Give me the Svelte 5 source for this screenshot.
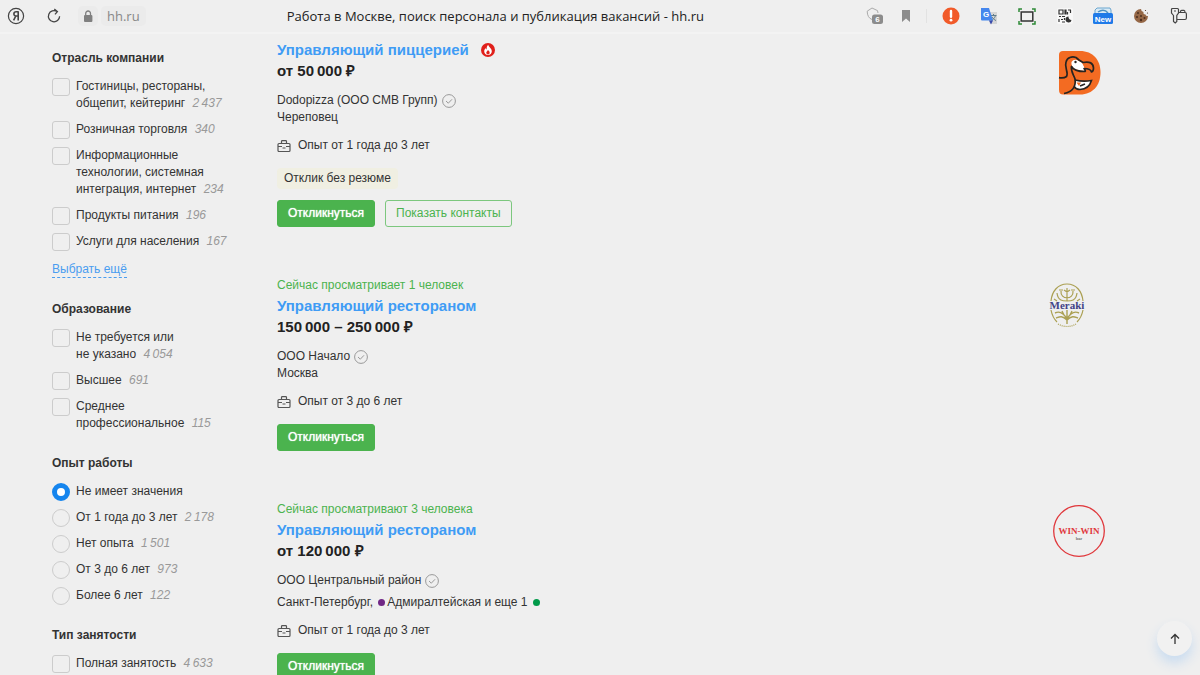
<script>
  let experience = 'any';

  const industries = [
    { id: 'horeca', lines: ['Гостиницы, рестораны,', 'общепит, кейтеринг'], count: '2\u2009437' },
    { id: 'retail', lines: ['Розничная торговля'], count: '340' },
    { id: 'it', lines: ['Информационные', 'технологии, системная', 'интеграция, интернет'], count: '234' },
    { id: 'food', lines: ['Продукты питания'], count: '196' },
    { id: 'services', lines: ['Услуги для населения'], count: '167' }
  ];

  const education = [
    { id: 'none', lines: ['Не требуется или', 'не указано'], count: '4\u2009054' },
    { id: 'higher', lines: ['Высшее'], count: '691' },
    { id: 'special', lines: ['Среднее', 'профессиональное'], count: '115' }
  ];

  const experiences = [
    { id: 'any', lines: ['Не имеет значения'] },
    { id: '1-3', lines: ['От 1 года до 3 лет'], count: '2\u2009178' },
    { id: 'no', lines: ['Нет опыта'], count: '1\u2009501' },
    { id: '3-6', lines: ['От 3 до 6 лет'], count: '973' },
    { id: '6+', lines: ['Более 6 лет'], count: '122' }
  ];

  const employment = [
    { id: 'full', lines: ['Полная занятость'], count: '4\u2009633' }
  ];

  const groups = [
    { title: 'Отрасль компании', name: 'industry', items: industries, more: true },
    { title: 'Образование', name: 'education', items: education },
    { title: 'Опыт работы', name: 'experience', items: experiences, radio: true },
    { title: 'Тип занятости', name: 'employment', items: employment }
  ];

  const vacancies = [
    {
      title: 'Управляющий пиццерией', hot: true, salary: 'от 50\u2009000 ₽',
      company: 'Dodopizza (ООО СМВ Групп)', city: 'Череповец',
      exp: 'Опыт от 1 года до 3 лет', tag: 'Отклик без резюме', contacts: true, logo: 'dodo'
    },
    {
      viewers: 'Сейчас просматривает 1 человек',
      title: 'Управляющий рестораном', salary: '150\u2009000 – 250\u2009000 ₽',
      company: 'ООО Начало', city: 'Москва', exp: 'Опыт от 3 до 6 лет', logo: 'meraki'
    },
    {
      viewers: 'Сейчас просматривают 3 человека',
      title: 'Управляющий рестораном', salary: 'от 120\u2009000 ₽',
      company: 'ООО Центральный район', city: 'Санкт-Петербург,', metro: 'Адмиралтейская и еще 1',
      exp: 'Опыт от 1 года до 3 лет', logo: 'winwin'
    }
  ];
</script>

<div class="page">
  <header class="toolbar">
    <button class="tool wide" aria-label="Яндекс">
      <svg width="18" height="18" viewBox="0 0 18 18">
        <circle cx="9" cy="9" r="7.6" fill="none" stroke="#444" stroke-width="1.2" />
        <path d="M11.2 4.2V13.6M11.2 4.8H9.2C6.2 4.8 6.2 9 8.8 9H11.2M8.8 9 6.6 13.4" fill="none" stroke="#444" stroke-width="1.6" />
      </svg>
    </button>
    <button class="tool wide" aria-label="Обновить">
      <svg width="16" height="16" viewBox="0 0 16 16" fill="none" stroke="#444" stroke-width="1.3">
        <path d="M13.6 8.3A5.6 5.6 0 1 1 11 3.5M8.3 1.1 11.4 3.6 9 6.4" />
      </svg>
    </button>
    <div class="address">
      <span class="lock">
        <svg width="10" height="13" viewBox="0 0 10 13">
          <rect x="1" y="5" width="8.4" height="7" rx="1" fill="#808080" />
          <path d="M2.7 5.5V3.4a2.4 2.4 0 0 1 4.8 0V5.5" fill="none" stroke="#808080" stroke-width="1.3" />
        </svg>
      </span>
      <span class="host">hh.ru</span>
    </div>
    <div class="page-title">Работа в Москве, поиск персонала и публикация вакансий - hh.ru</div>
    <button class="tool small" aria-label="Защита">
      <svg width="18" height="18" viewBox="0 0 18 18">
        <path d="M6 12.5C3 11.5 1.2 8.5 1.2 4.2L6 1 11.5 3.6 12 6" fill="none" stroke="#aaa" stroke-width="1" />
        <rect x="6" y="7.5" width="11" height="9.5" rx="2.5" fill="#8c8c8c" />
        <text x="11.5" y="15.2" text-anchor="middle" font-size="8" font-weight="700" fill="#fff">6</text>
      </svg>
    </button>
    <button class="tool small" aria-label="Закладка">
      <svg width="10" height="14" viewBox="0 0 10 14"><path d="M1 1H9V13L5 9.6 1 13Z" fill="#8c8c8c" /></svg>
    </button>
    <span class="divider"></span>
    <button class="tool" aria-label="Предупреждение">
      <svg width="18" height="18" viewBox="0 0 18 18">
        <circle cx="9" cy="9" r="8.5" fill="#f15a29" />
        <path d="M9 4V9.8" stroke="#fff" stroke-width="2.4" stroke-linecap="round" />
        <circle cx="9" cy="13.2" r="1.4" fill="#fff" />
      </svg>
    </button>
    <button class="tool" aria-label="Переводчик">
      <svg width="18" height="18" viewBox="0 0 18 18">
        <path d="M7 5H17V17H10Z" fill="#d6d6d6" />
        <path d="M11 8.500H16.500M13.500 7V8.500M15.500 8.500C15 11 12.500 13 11.500 13.500M12 10C13 11.500 14.500 13 16 13.500" stroke="#607d8b" stroke-width="1" fill="none" />
        <path d="M1 1H9L13 13.500H2Q1 13.500 1 12.500Z" fill="#4587ee" />
        <path d="M9 13.500H13L11 17.500Z" fill="#3949ab" />
        <text x="6" y="10" text-anchor="middle" font-size="8" font-weight="700" fill="#fff">G</text>
      </svg>
    </button>
    <button class="tool" aria-label="Снимок экрана">
      <svg width="18" height="17" viewBox="0 0 18 17" fill="none">
        <rect x="3.2" y="4" width="11.6" height="9" stroke="#333" stroke-width="1.5" />
        <path d="M1 4V1H4M14 1H17V4M17 13V16H14M4 16H1V13" stroke="#2e8b37" stroke-width="1.5" />
      </svg>
    </button>
    <button class="tool" aria-label="QR-код">
      <svg width="16" height="16" viewBox="0 0 16 16">
        <rect width="16" height="16" rx="2" fill="#f8f8f8" />
        <path d="M2 2H6V6H2ZM8 2H9V6H8ZM11 2H14M13.5 2V5M10.5 4V6.5M2 8.5H4M5 8.5H8M2 11V14M4 11.5H6M5 14H8M7.5 10V12" fill="none" stroke="#333" stroke-width="1.2" />
        <path d="M11.5 8.5A3 3 0 1 0 14.5 12 3 3 0 0 1 11.5 8.500Z" fill="#333" />
      </svg>
    </button>
    <button class="tool" aria-label="Новое">
      <svg width="22" height="18" viewBox="0 0 22 18">
        <path d="M3 7V3L5 1H18L19 3V7" fill="#d9eaf5" stroke="#6ba6cf" />
        <path d="M6 5Q12 1 16 6" fill="none" stroke="#4c91c4" stroke-width="1.5" />
        <rect x="1" y="6" width="20" height="11" rx="1.5" fill="#1f7ae8" />
        <text x="11" y="14.5" text-anchor="middle" font-size="8" font-weight="700" fill="#fff">New</text>
      </svg>
    </button>
    <button class="tool" aria-label="Cookie">
      <svg width="16" height="16" viewBox="0 0 16 16">
        <path d="M8 1A7 7 0 1 0 15 8Q13 8.5 12.5 6.5 10 6.5 10.5 4 8 3.5 8 1Z" fill="#956746" />
        <g fill="#4d3020">
          <circle cx="5" cy="5" r="1" /><circle cx="4" cy="9" r="1.1" /><circle cx="8" cy="8" r="1" />
          <circle cx="8" cy="12" r="1.2" /><circle cx="11.5" cy="10" r="1" />
          <circle cx="12.5" cy="2.5" r=".6" /><circle cx="14.5" cy="5" r=".6" />
        </g>
      </svg>
    </button>
    <button class="tool" aria-label="Пароли">
      <svg width="18" height="18" viewBox="0 0 18 18" fill="none" stroke="#444" stroke-width="1.2">
        <path d="M3.500 8.500 1.500 6V2.500Q1.500 1.500 2.500 1.500H7.500Q8.500 1.500 8.500 2.500V6L6.800 8.500V14.500L5.200 16 3.500 14.500ZM4 4H6" />
        <path d="M8.500 5.500H15Q16.400 5.500 16.400 7V11Q16.400 12.500 15 12.500H7M10.500 5.500V4.500Q10.500 3.300 11.700 3.300H14Q15 3.300 15 5.500" />
      </svg>
    </button>
  </header>

  <div class="content">
    <aside class="filters">
      {#each groups as group}
        <fieldset class="group">
          <legend>{group.title}</legend>
          {#each group.items as item}
            <label class="option">
              {#if group.radio}
                <input type="radio" name={group.name} value={item.id} bind:group={experience} />
              {:else}
                <input type="checkbox" name={group.name} value={item.id} />
              {/if}
              <span>
                {#each item.lines as line, i}{#if i > 0}<br />{/if}{line}{/each}
                {#if item.count}<i>{item.count}</i>{/if}
              </span>
            </label>
          {/each}
          {#if group.more}
            <a class="more" href="#more">Выбрать ещё</a>
          {/if}
        </fieldset>
      {/each}
    </aside>

    <main class="vacancies">
      {#each vacancies as v}
        <article class="vacancy">
          <div class="info">
            {#if v.viewers}<div class="viewers">{v.viewers}</div>{/if}
            <h2>
              <a href="#vacancy">{v.title}</a>
              {#if v.hot}
                <svg width="14" height="14" viewBox="0 0 14 14">
                  <circle cx="7" cy="7" r="7" fill="#e0201b" />
                  <path d="M7.2 1.8C7.5 4 10.8 5.5 10.8 8.3 10.8 10.5 9.2 12 7 12S3.2 10.5 3.2 8.3C3.2 6.8 4 5.8 4.6 5 4.8 6 5.2 6.3 5.6 6.5 5.6 4.5 6 3 7.2 1.8Z" fill="#fff" />
                  <path d="M7 7C8 8 8.7 8.7 8.7 9.7A1.7 1.7 0 0 1 5.3 9.7C5.3 8.7 6.3 8.2 7 7Z" fill="#e0201b" />
                </svg>
              {/if}
            </h2>
            <div class="salary">{v.salary}</div>
            <div class="company">
              <a href="#company">{v.company}</a>
              <svg width="14" height="14" viewBox="0 0 14 14" fill="none" stroke="#999">
                <circle cx="7" cy="7" r="6.4" />
                <path d="M4 7 6.3 9.2 10 5.3" />
              </svg>
            </div>
            {#if v.metro}
              <div class="city metro">{v.city} <b class="dot purple"></b>{v.metro} <b class="dot green"></b></div>
            {:else}
              <div class="city">{v.city}</div>
            {/if}
            <div class="experience">
              <svg width="14" height="14" viewBox="0 0 14 14" fill="none" stroke="#555" stroke-width="1.2">
                <rect x="1" y="4.5" width="12" height="8" rx="1" />
                <path d="M4.5 4.5V2.5Q4.5 1.7 5.3 1.7H8.7Q9.5 1.7 9.5 2.5V4.5M1 7.5H5M9 7.5H13M5.5 9H8.5" />
              </svg>
              {v.exp}
            </div>
            {#if v.tag}<div class="tag">{v.tag}</div>{/if}
            <div class="actions">
              <button class="respond">Откликнуться</button>
              {#if v.contacts}<button class="contacts">Показать контакты</button>{/if}
            </div>
          </div>

          <svg class="logo" width="56" height="52" viewBox="0 0 56 52">
            {#if v.logo === 'dodo'}
              <path d="M10 12Q10 8 14 8H31C44 8 51.5 17 51.5 29.5S44 51.5 31 51.5H14Q10 51.5 10 47Z" fill="#f36b22" />
              <path d="M26 37Q34 39 42.500 37.500Q40 44 34 46Q29 47 26 44Z" fill="#fff" />
              <path d="M22.500 19Q25 15 30 18L34 20 35 24 37 28Q30 28 25 25.500Q22 23 22.500 19Z" fill="#fff" />
              <path d="M33 20Q44 18 44.500 25Q44.500 28 43 29Q42 25.500 36 25Z" fill="#f36b22" />
              <path d="M10 34.700Q15 35.500 17.500 33.500C20 29 15 25 17 19 18 14.500 23 13 27 14.500L30 17 34 19.500Q44 17.500 44.500 25Q44.500 28.500 42.500 29Q41.500 25.500 35 25.500Q37 28 36 28.500C29 28.500 24 26.500 22.500 23.500C21.500 29 25 32 26 36C27 43 24 49 15 50.500" fill="none" stroke="#272421" stroke-width="1.700" stroke-linejoin="round" />
              <path d="M26 37Q34 39 42.500 37.500Q40 46 31 46.500 27 46.500 25 43.500M31 43 36 41" fill="none" stroke="#272421" stroke-width="1.600" />
              <circle cx="26.500" cy="19" r="1.200" fill="#272421" />
              <path d="M27.500 39.500H32L30 43Z" fill="#f36b22" />
            {:else if v.logo === 'meraki'}
              <g fill="none" stroke="#aba053" stroke-width="1.2">
                <path d="M2 20C3 10 9 3 18 3S33 10 34 20M2 29C3 34 5 38 8 41M34 29C33 34 31 38 28 41" />
                <path d="M18 7V20M12 10C11 19 25 19 24 10M8 12C9 20 14 20 18 20 22 20 27 20 28 12M15 9 18 11 21 9M10 9H14M22 9H26M5 18 8 20M31 18 28 20" />
                <path d="M18 29V43M18 38C14 31 10 30 6 32M18 38C22 31 26 30 30 32M18 39C13 34 10 36 7 37M18 39C23 34 26 36 29 37M13 30 15 34M23 30 21 34" stroke-width="1.4" />
                <path d="M9 43Q18 48 27 43" stroke-dasharray="1 1" />
              </g>
              <text x="18" y="28" text-anchor="middle" font-family="Liberation Serif, serif" font-size="11" font-weight="700" fill="#434386">Meraki</text>
            {:else}
              <circle cx="30" cy="26" r="25.3" fill="none" stroke="#e0383c" stroke-width="1.3" />
              <text x="30" y="29" text-anchor="middle" font-family="Liberation Serif, serif" font-size="9" font-weight="700" fill="#e0383c">WIN-WIN</text>
              <text x="30" y="35" text-anchor="middle" font-family="Liberation Serif, serif" font-size="5" fill="#333">bar</text>
            {/if}
          </svg>
        </article>
      {/each}
    </main>
  </div>

  <button class="to-top" aria-label="Наверх">
    <svg width="12" height="12" viewBox="0 0 12 12" fill="none" stroke="#333" stroke-width="1.3">
      <path d="M6 11V1.5M2 5.500 6 1.500 10 5.500" />
    </svg>
  </button>
</div>

<style>
  :global(body) { background: #efefef; }
  .page {
    height: 100vh; overflow: hidden; background: #efefef; color: #333;
    font: 12px/17px "Liberation Sans", Arial, sans-serif;
  }
  a { color: inherit; text-decoration: none; }
  button { font: inherit; cursor: pointer; }
  svg { flex: none; }

  .toolbar {
    display: flex; align-items: center; height: 34px; padding-right: 2px;
    border-bottom: 2px solid #f3f3f3; box-sizing: border-box;
  }
  .tool {
    display: flex; align-items: center; justify-content: center;
    width: 38px; height: 30px; padding: 0; border: none; background: none;
  }
  .tool.small { width: 31px; }
  .tool.wide { width: 32px; margin-right: 6px; }
  .divider { width: 1px; height: 14px; margin: 0 5px; background: #e2e2e2; }
  .address { display: flex; gap: 3px; margin-left: 2px; font: 13px/20px "Open Sans", "Noto Sans", sans-serif; color: #888; }
  .address span { background: #ebebeb; border-radius: 5px; }
  .address .lock { display: flex; align-items: center; justify-content: center; width: 20px; }
  .address .host { padding: 0 6px; }
  .page-title {
    flex: 1; padding-right: 14px; text-align: center; white-space: nowrap; overflow: hidden;
    color: #222; font: 13px/20px "Open Sans", "Noto Sans", sans-serif;
  }

  .content { display: flex; padding: 5px 95px 0 52px; }
  .filters { width: 225px; flex: none; padding-top: 11px; }
  .group { display: flex; flex-direction: column; gap: 9px; margin: 0 0 23px; padding: 0; border: none; min-width: 0; }
  legend { margin-bottom: 11px; padding: 0; font-weight: 700; }
  .option { display: flex; align-items: flex-start; gap: 6px; white-space: nowrap; }
  .option i { margin-left: 4px; color: #999; }
  .option input {
    appearance: none; flex: none; width: 18px; height: 18px; margin: 0 0 -1px;
    border: 1px solid #ccc; border-radius: 3px;
  }
  .option input[type='radio'] { border-radius: 50%; }
  .option input[type='radio']:checked { border: 5px solid #1585ee; background: #fff; }
  .more { align-self: flex-start; margin-top: 2px; line-height: 16px; color: #4a9df0; border-bottom: 1px dashed #4a9df0; }

  .vacancies { flex: 1; min-width: 0; }
  .vacancy { display: flex; justify-content: space-between; margin-bottom: 50px; }
  .viewers { margin-bottom: 1px; color: #4bb34e; }
  h2 { display: flex; align-items: center; gap: 12px; margin: 0; font-size: 15px; line-height: 21px; color: #3f9cf5; }
  .salary { font-size: 15px; line-height: 21px; font-weight: 700; color: #222; }
  .company { display: flex; align-items: center; gap: 4px; margin-top: 11px; }
  .metro { margin-top: 5px; }
  .dot { display: inline-block; width: 7px; height: 7px; margin: 0 2px; border-radius: 50%; }
  .purple { background: #702785; }
  .green { background: #009a49; }
  .experience { display: flex; align-items: center; gap: 7px; margin-top: 11px; }
  .tag {
    width: fit-content; margin: 14px 0 -3px; padding: 2px 7px;
    border-radius: 4px; background: #f0efe2;
  }
  .actions { display: flex; gap: 10px; margin-top: 14px; }
  .actions button { height: 27px; padding: 0 10px; border: 1px solid #4bb34e; border-radius: 3px; }
  .actions .respond { background: #4bb34e; color: #fff; text-shadow: 0 0 1px #fff; }
  .actions .contacts { background: none; color: #4bb34e; border-color: #7cc77e; }
  .logo { margin-top: 4px; }

  .to-top {
    position: fixed; right: 8px; bottom: 19px; width: 35px; height: 35px;
    display: flex; align-items: center; justify-content: center;
    border: none; border-radius: 50%; background: #f1f1f1; box-shadow: 0 7px 12px #c9dcf0;
  }
</style>
